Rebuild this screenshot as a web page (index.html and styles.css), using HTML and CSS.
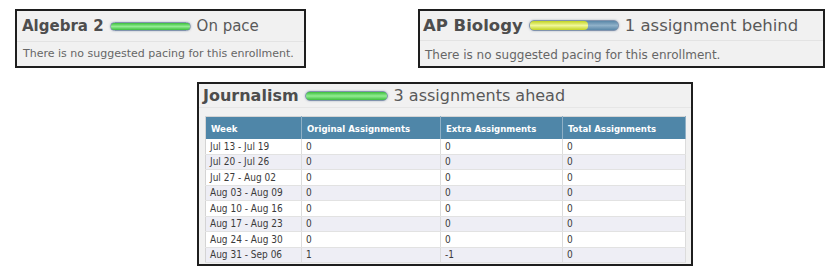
FILE: index.html
```html
<!DOCTYPE html>
<html lang="en">
<head>
    <meta charset="UTF-8">
    <title>Pacing</title>
    <link rel="stylesheet" href="styles.css">
</head>
<body>
    <div class="row top-row">
        <div class="card card-algebra">
            <div class="card-head">
                <span class="course">Algebra 2</span>
                <span class="pace-bar"><span class="pace-fill green" style="width: 100%"></span></span>
                <span class="status">On pace</span>
            </div>
            <div class="card-body">There is no suggested pacing for this enrollment.</div>
        </div>

        <div class="card card-bio">
            <div class="card-head">
                <span class="course">AP Biology</span>
                <span class="pace-bar"><span class="pace-fill yellow" style="width: 66%"></span></span>
                <span class="status">1 assignment behind</span>
            </div>
            <div class="card-body">There is no suggested pacing for this enrollment.</div>
        </div>
    </div>

    <div class="row bottom-row">
        <div class="card card-journal">
            <div class="card-head">
                <span class="course">Journalism</span>
                <span class="pace-bar"><span class="pace-fill green" style="width: 100%"></span></span>
                <span class="status">3 assignments ahead</span>
            </div>
            <div class="card-table">
                <table class="pacing">
                    <thead>
                        <tr>
                            <th class="col-week">Week</th>
                            <th class="col-orig">Original Assignments</th>
                            <th class="col-extra">Extra Assignments</th>
                            <th class="col-total">Total Assignments</th>
                        </tr>
                    </thead>
                    <tbody>
                        <tr><td>Jul 13 - Jul 19</td><td>0</td><td>0</td><td>0</td></tr>
                        <tr><td>Jul 20 - Jul 26</td><td>0</td><td>0</td><td>0</td></tr>
                        <tr><td>Jul 27 - Aug 02</td><td>0</td><td>0</td><td>0</td></tr>
                        <tr><td>Aug 03 - Aug 09</td><td>0</td><td>0</td><td>0</td></tr>
                        <tr><td>Aug 10 - Aug 16</td><td>0</td><td>0</td><td>0</td></tr>
                        <tr><td>Aug 17 - Aug 23</td><td>0</td><td>0</td><td>0</td></tr>
                        <tr><td>Aug 24 - Aug 30</td><td>0</td><td>0</td><td>0</td></tr>
                        <tr><td>Aug 31 - Sep 06</td><td>1</td><td>-1</td><td>0</td></tr>
                    </tbody>
                </table>
            </div>
        </div>
    </div>
</body>
</html>
```

FILE: styles.css
```css
body {
    margin: 0;
    background-color: #ffffff;
    font-family: "DejaVu Sans", Verdana, sans-serif;
    color: #555555;
}
.row {
    display: flex;
}
.top-row {
    justify-content: space-between;
    padding: 9px 7px 0 15px;
}
.bottom-row {
    padding: 14px 0 0 197px;
}
.card {
    border: 2px solid #1e1e1e;
    background-color: #f1f1f1;
    box-sizing: border-box;
}
.card-algebra {
    width: 291px;
    height: 59px;
}
.card-bio {
    width: 407px;
    height: 59px;
}
.card-journal {
    width: 496px;
    height: 184px;
}
.card-head {
    display: flex;
    align-items: center;
    gap: 6px;
    height: 31px;
    padding: 0 5px;
    border-bottom: 1px solid #e3e3e3;
    box-sizing: border-box;
}
.card-bio .card-head {
    padding: 0 3px;
    height: 30px;
}
.card-journal .card-head {
    padding: 0 4px;
    height: 24px;
    border-bottom-color: #e6e6e6;
}
.course {
    font-weight: bold;
    font-size: 15px;
    color: #4d4d4d;
}
.status {
    font-size: 15px;
    color: #595959;
}
.card-bio .course,
.card-bio .status {
    font-size: 16.5px;
}
.card-journal .course,
.card-journal .status {
    font-size: 16px;
}
.pace-bar {
    display: block;
    width: 79px;
    height: 7px;
    border: 1px solid #8193ad;
    border-radius: 5px;
    overflow: hidden;
    background: linear-gradient(to bottom, #5a87a8, #8fb1c9 50%, #5a87a8);
    box-shadow: 0 0 2px rgba(90, 110, 140, 0.5);
}
.card-bio .pace-bar {
    width: 88px;
    height: 9px;
}
.card-journal .pace-bar {
    width: 81px;
    height: 8px;
}
.pace-fill {
    display: block;
    height: 100%;
}
.pace-fill.green {
    background: linear-gradient(to bottom, #3cbf3c, #92ec92 50%, #3cbf3c);
}
.pace-fill.yellow {
    background: linear-gradient(to bottom, #c3d421, #f0f79a 50%, #c3d421);
    border-radius: 0 4px 4px 0;
}
.card-body {
    font-size: 11px;
    color: #666666;
    padding: 5px 5px 0 6px;
    line-height: 14px;
}
.card-bio .card-body {
    font-size: 12px;
    padding: 7px 3px 0 5px;
}
.card-table {
    padding: 8px 5px 0 6px;
}
.pacing {
    width: 481px;
    border-collapse: collapse;
    font-family: "DejaVu Sans Condensed", "DejaVu Sans", sans-serif;
    font-size: 10px;
    color: #3a3a3a;
    border: 1px solid #d4d4d4;
}
.pacing th {
    background-color: #4f86a8;
    color: #ffffff;
    font-weight: bold;
    font-size: 9.5px;
    text-align: left;
    height: 22px;
    padding: 0 5px;
    border-right: 1px solid #8fb0c6;
}
.pacing td {
    height: 14.5px;
    padding: 0 4px;
    border-right: 1px solid #dcdcdc;
    border-bottom: 1px solid #e2e2e2;
}
.pacing tbody tr:nth-child(even) {
    background-color: #eeeef5;
}
.pacing tbody tr:nth-child(odd) {
    background-color: #ffffff;
}
.col-week {
    width: 85px;
}
.col-orig {
    width: 128px;
}
.col-extra {
    width: 111px;
}
```
